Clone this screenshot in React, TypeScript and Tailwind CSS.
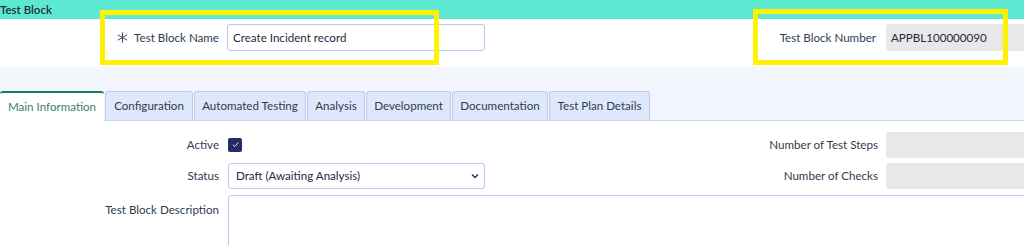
import React from "react";

const tabs = [
  { label: "Configuration", w: "w-[88px]" },
  { label: "Automated Testing", w: "w-[112px]" },
  { label: "Analysis", w: "w-[58px]" },
  { label: "Development", w: "w-[85px]" },
  { label: "Documentation", w: "w-[96px]" },
  { label: "Test Plan Details", w: "w-[101px]" },
];

export default function App() {
  return (
    <div
      className="relative w-[1024px] h-[245px] overflow-hidden bg-white text-[11.6px] text-[#2f3c52]"
      style={{ fontFamily: "Lato, 'Open Sans', sans-serif" }}
    >
      {/* Header */}
      <div className="h-[19px] bg-[#5de9d1] text-[11.5px] leading-[19px] font-semibold text-[#1f2d3a]">
        Test Block
      </div>

      {/* Row 1 */}
      <div className="flex h-[48px] items-start pt-[5px]">
        <div className="flex w-[512px] items-center">
          <div className="flex w-[219px] shrink-0 items-center justify-end">
            <svg width="11" height="11" viewBox="0 0 12 12" className="mr-[6px]">
              <g stroke="#3a4960" strokeWidth="1.1" strokeLinecap="round">
                <path d="M6 0.8 L6 11.2" />
                <path d="M1.5 3.4 L10.5 8.6" />
                <path d="M1.5 8.6 L10.5 3.4" />
              </g>
            </svg>
            <span>Test Block Name</span>
          </div>
          <div className="ml-[8px] flex h-[27px] w-[258px] items-center rounded-[3px] border border-[#b8c7ef] px-[5px] text-[#1f2a3c]">
            Create Incident record
          </div>
        </div>
        <div className="flex flex-1 items-center">
          <div className="flex-1 pr-[10px] text-right">Test Block Number</div>
          <div className="flex h-[27px] w-[138px] items-center rounded-l-[3px] bg-[#e8e8e8] px-[5px] text-[#1f2a3c]">
            APPBL100000090
          </div>
        </div>
      </div>

      {/* Light area + tabs */}
      <div className="bg-[#f4f6fd] pt-[24px]">
        <div className="flex h-[30px] items-end border-b border-[#c9d5f3]">
          <div className="relative -mb-px flex h-[30px] w-[104px] items-center justify-center rounded-t-[3px] border-t-2 border-[#1f7a60] bg-white text-[#3b7f6a]">
            Main Information
          </div>
          {tabs.map((t) => (
            <div
              key={t.label}
              className={`ml-px flex h-[29px] ${t.w} items-center justify-center rounded-t-[3px] border border-b-0 border-[#bccbef] bg-[#dfe7fb] text-[#2f3c52]`}
            >
              {t.label}
            </div>
          ))}
        </div>
      </div>

      {/* Content */}
      <div className="pt-[11px]">
        <div className="flex h-[26px] items-center">
          <div className="flex w-[512px] items-center">
            <div className="w-[219px] shrink-0 text-right">Active</div>
            <div className="ml-[9px] flex h-[14px] w-[14px] items-center justify-center rounded-[2px] bg-[#262b66]">
              <svg width="9" height="9" viewBox="0 0 10 10">
                <path d="M2 5.2 L4.2 7.3 L8.2 2.8" stroke="#dfe3f5" strokeWidth="1.1" fill="none" />
              </svg>
            </div>
          </div>
          <div className="flex flex-1 items-center">
            <div className="flex-1 pr-[8px] text-right">Number of Test Steps</div>
            <div className="h-[26px] w-[138px] rounded-l-[3px] bg-[#e8e8e8]"></div>
          </div>
        </div>

        <div className="mt-[5px] flex h-[26px] items-center">
          <div className="flex w-[512px] items-center">
            <div className="w-[219px] shrink-0 text-right">Status</div>
            <div className="ml-[9px] flex h-[26px] w-[257px] items-center justify-between rounded-[3px] border border-[#b8c7ef] pl-[7px] pr-[4px] text-[#1f2a3c]">
              <span>Draft (Awaiting Analysis)</span>
              <svg width="10" height="10" viewBox="0 0 10 10">
                <path d="M2 3.5 L5 6.5 L8 3.5" stroke="#2a3142" strokeWidth="1.4" fill="none" />
              </svg>
            </div>
          </div>
          <div className="flex flex-1 items-center">
            <div className="flex-1 pr-[8px] text-right">Number of Checks</div>
            <div className="h-[26px] w-[138px] rounded-l-[3px] bg-[#e8e8e8]"></div>
          </div>
        </div>

        <div className="mt-[6px] flex items-start">
          <div className="w-[219px] shrink-0 pt-[6px] text-right">Test Block Description</div>
          <div className="ml-[9px] h-[80px] w-[820px] shrink-0 rounded-[3px] border border-[#b8c7ef]"></div>
        </div>
      </div>

      {/* Yellow annotation boxes */}
      <div className="pointer-events-none absolute left-[100px] top-[10px] h-[55px] w-[339px] border-[5px] border-[#fff200]"></div>
      <div className="pointer-events-none absolute left-[753px] top-[9px] h-[56px] w-[255px] border-[5px] border-[#fff200]"></div>
    </div>
  );
}
